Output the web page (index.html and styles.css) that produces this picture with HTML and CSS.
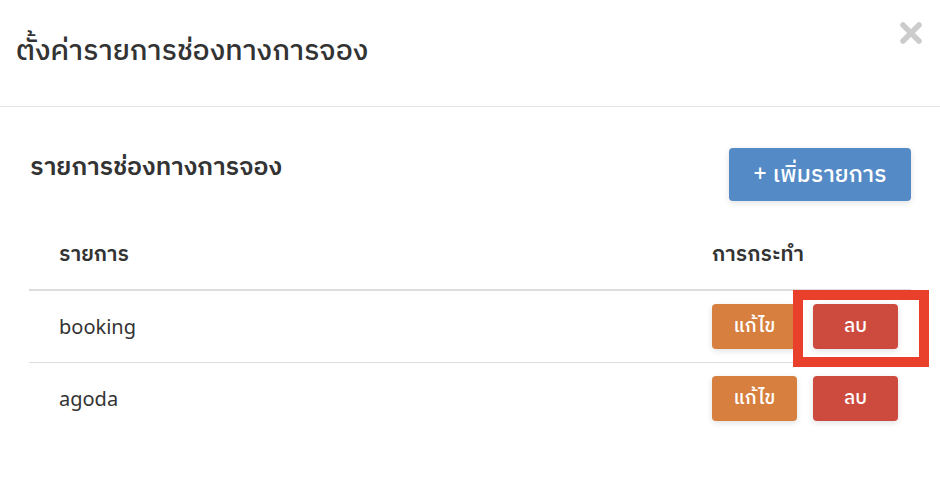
FILE: index.html
```html
<!DOCTYPE html>
<html lang="th">
<head>
<meta charset="utf-8">
<title>ตั้งค่ารายการช่องทางการจอง</title>
<link rel="stylesheet" href="styles.css">
</head>
<body>
<div class="modal">
  <div class="modal-header">
    <h3 class="modal-title">ตั้งค่ารายการช่องทางการจอง</h3>
    <button class="close" aria-label="close">
      <svg width="22" height="22" viewBox="0 0 22 22"><path d="M3 3 L19 19 M19 3 L3 19" stroke="#cccccc" stroke-width="5.5" stroke-linecap="round"/></svg>
    </button>
  </div>
  <div class="modal-body">
    <div class="toolbar">
      <h4 class="subtitle">รายการช่องทางการจอง</h4>
      <button class="btn btn-primary">+ เพิ่มรายการ</button>
    </div>
    <table class="table">
      <thead>
        <tr><th class="col-name">รายการ</th><th class="col-action">การกระทำ</th></tr>
      </thead>
      <tbody>
        <tr>
          <td class="col-name">booking</td>
          <td class="col-action"><div class="actions"><button class="btn btn-warning">แก้ไข</button><span class="mark"><button class="btn btn-danger">ลบ</button></span></div></td>
        </tr>
        <tr class="last">
          <td class="col-name">agoda</td>
          <td class="col-action"><div class="actions"><button class="btn btn-warning">แก้ไข</button><span class="nomark"><button class="btn btn-danger">ลบ</button></span></div></td>
        </tr>
      </tbody>
    </table>
  </div>
</div>
</body>
</html>
```

FILE: styles.css
```css
html, body {
  margin: 0;
  padding: 0;
  background: #ffffff;
}
body {
  font-family: "Noto Sans", "IBM Plex Sans Thai", "Noto Sans Thai", "Noto Sans Thai UI", sans-serif;
  color: #333333;
  width: 940px;
  height: 498px;
  overflow: hidden;
}
.modal {
  width: 940px;
}
.modal-header {
  height: 107px;
  border-bottom: 1px solid #e5e5e5;
  display: flex;
  justify-content: space-between;
  align-items: flex-start;
  box-sizing: border-box;
  padding: 0 18px 0 16px;
}
.modal-title {
  margin: 30px 0 0 0;
  font-size: 28.5px;
  font-weight: 500;
  line-height: 38px;
  color: #333;
}
.close {
  background: none;
  border: none;
  padding: 0;
  margin-top: 22px;
  width: 22px;
  height: 22px;
  cursor: pointer;
}
.close svg { display: block; }
.modal-body {
  padding: 41px 29px 0 29px;
}
.toolbar {
  display: flex;
  justify-content: space-between;
  align-items: flex-start;
  height: 73px;
}
.subtitle {
  margin: 1px 0 0 1px;
  font-size: 25px;
  font-weight: 600;
  line-height: 32px;
  color: #333;
}
.btn {
  border: none;
  border-radius: 4px;
  color: #fff;
  font-family: inherit;
  box-shadow: 0 2px 6px rgba(0,0,0,0.12);
  cursor: pointer;
}
.btn-primary {
  background: #548bc6;
  width: 182px;
  height: 53px;
  font-size: 23px;
  font-weight: 500;
}
.table {
  width: 100%;
  border-collapse: collapse;
}
.table th {
  text-align: left;
  font-size: 21px;
  font-weight: 600;
  height: 68px;
  vertical-align: middle;
  border-bottom: 2px solid #dddddd;
  padding: 0;
}
.table td {
  font-size: 20px;
  height: 71px;
  vertical-align: middle;
  border-bottom: 1px solid #dddddd;
  padding: 0;
}
.table tr.last td { border-bottom: none; }
.col-name { padding-left: 30px !important; }
.col-action { width: 199px; }
.actions {
  display: flex;
  align-items: center;
  gap: 16px;
}
.btn-warning, .btn-danger {
  width: 85px;
  height: 45px;
  font-size: 19px;
  font-weight: 500;
}
.btn-warning { background: #d77f3f; }
.btn-danger { background: #cd4a3f; }
.mark, .nomark {
  display: block;
  position: relative;
}
.mark::after {
  content: "";
  position: absolute;
  left: -20px;
  top: -14px;
  width: 136px;
  height: 77px;
  box-sizing: border-box;
  border: 10px solid #e8402a;
  pointer-events: none;
}
.mark .btn, .nomark .btn { display: block; }
```
